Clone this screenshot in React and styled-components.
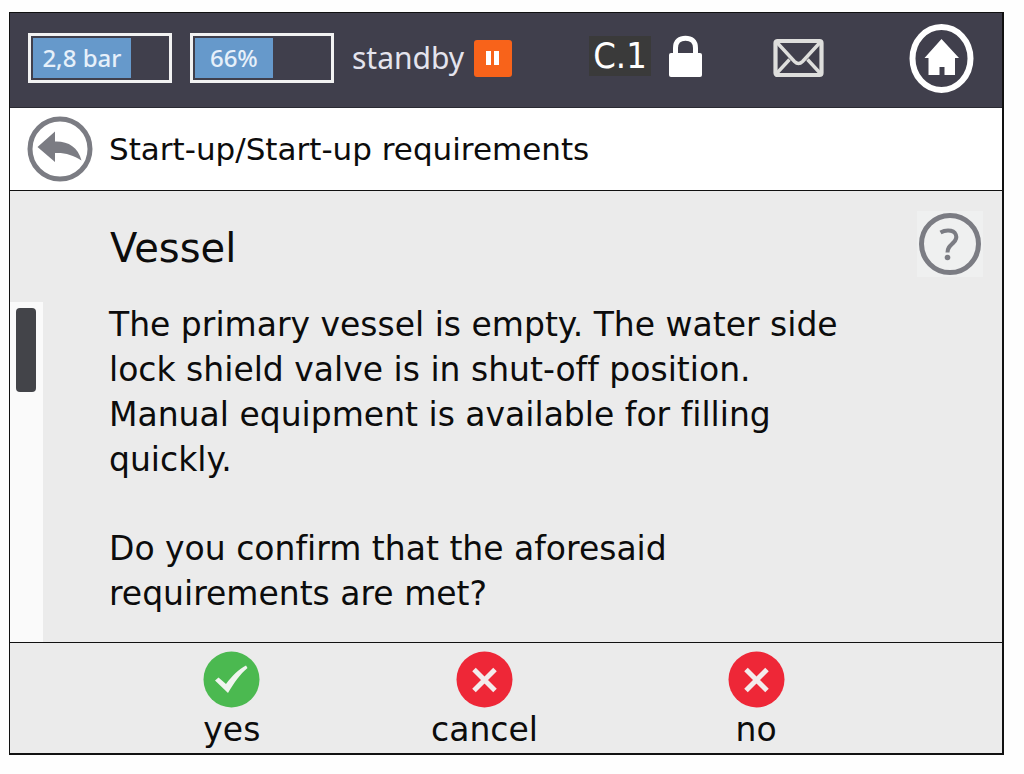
import styled, { createGlobalStyle, ThemeProvider } from "styled-components";

const theme = {
  sans: `"DejaVu Sans", Verdana, sans-serif`,
  narrow: `"Noto Sans", "Open Sans", sans-serif`,
  colors: {
    bar: "#403f4c",
    panel: "#ebebeb",
    line: "#111111",
    blue: "#6699cb",
    orange: "#f8631a",
    grey: "#7b7c83",
    green: "#4bb950",
    red: "#ee2737",
  },
}

const GlobalStyle = createGlobalStyle`
  * {
    box-sizing: border-box;
  }
  body {
    margin: 0;
    background: #fefefe;
    color: #0c0c0c;
    font-family: ${theme.sans};
    font-variant-ligatures: none;
  }
  button {
    padding: 0;
    border: 0;
    background: none;
    color: inherit;
    font: inherit;
    cursor: pointer;
  }
  svg {
    display: block;
  }
`

const Page = styled.div`
  display: flex;
  min-height: 100vh;
  padding: 12px 20px 19px 9px;
`

const Frame = styled.div`
  flex: 1;
  display: flex;
  flex-direction: column;
  border: 1px solid ${props => props.theme.colors.line};
  border-right-width: 2px;
  border-bottom-width: 2px;
`

const TopBar = styled.header`
  display: flex;
  align-items: center;
  height: 95px;
  padding: 0 28px 4px 18px;
  background: ${props => props.theme.colors.bar};
  border-bottom: 1px solid #2a2a32;
  color: #f4f4f8;
`

const Gauge = styled.div`
  width: 144px;
  height: 50px;
  margin-right: 18px;
  padding: 2px;
  border: 3px solid #f2f2f2;
`

const GaugeFill = styled.div`
  display: flex;
  align-items: center;
  justify-content: center;
  height: 100%;
  background: ${props => props.theme.colors.blue};
  color: #e6f0fa;
  font: 500 24px/40px ${props => props.theme.narrow};
  white-space: nowrap;
`

const Status = styled.div`
  display: flex;
  align-items: center;
  gap: 10px;
  font: 30px/40px ${props => props.theme.narrow};
  color: #e4e4ee;
`

const Right = styled.div`
  flex: 1;
  display: flex;
  align-items: center;
  justify-content: flex-end;
`

const Code = styled.div`
  width: 62px;
  margin: 0 18px 4px 0;
  background: #3a3a3a;
  color: #ffffff;
  font: 36px/40px "DejaVu Sans Condensed", ${props => props.theme.narrow};
  text-align: center;
`

const IconButton = styled.button`
  margin-left: ${props => props.$gap || 0}px;
`

const TitleBar = styled.nav`
  display: flex;
  align-items: center;
  gap: 16px;
  height: 83px;
  padding-left: 17px;
  background: #ffffff;
  border-bottom: 1px solid ${props => props.theme.colors.line};
`

const Crumb = styled.h1`
  margin: 0;
  font-size: 31px;
  font-weight: 400;
  line-height: 40px;
`

const Main = styled.main`
  flex: 1;
  display: flex;
  flex-direction: column;
  background: ${props => props.theme.colors.panel};
`

const Head = styled.div`
  display: flex;
  align-items: center;
  justify-content: space-between;
  height: 111px;
  padding: 0 19px 6px 100px;
`

const Heading = styled.h2`
  margin: 0;
  padding-top: 8px;
  font-size: 40px;
  font-weight: 400;
  line-height: 48px;
`

const HelpButton = styled.button`
  padding: 2px;
  background: #eff0f0;
`

const Content = styled.div`
  flex: 1;
  display: flex;
`

const Track = styled.div`
  width: 33px;
  padding: 6px;
  background: #fafafa;
`

const Thumb = styled.div`
  width: 20px;
  height: 84px;
  border-radius: 4px;
  background: #434449;
`

const Copy = styled.div`
  padding: 0 66px;
  font-size: 33px;
  line-height: 45px;
`

const Paragraph = styled.p`
  margin: 0 0 44px;
  &:last-child {
    margin: 0;
  }
`

const Actions = styled.footer`
  display: grid;
  grid-template-columns: 254fr 252fr 292fr;
  height: 111px;
  padding: 8px 100px 0 95px;
  background: ${props => props.theme.colors.panel};
  border-top: 1px solid ${props => props.theme.colors.line};
`

const Action = styled.button`
  display: flex;
  flex-direction: column;
  align-items: center;
  justify-self: center;
  && {
    font-size: 33px;
    line-height: 44px;
  }
`

const Pause = () => (
  <svg width="38" height="37" viewBox="0 0 38 37">
    <rect width="38" height="37" rx="3" fill={theme.colors.orange} />
    <path d="M12 11h5v14h-5zM20 11h5v14h-5z" fill="#fff" />
  </svg>
)

const Lock = () => (
  <svg width="34" height="46" viewBox="0 0 34 46" fill="none">
    <path d="M6.500 20V13C6.500 6 11 3.200 16.500 3.200s10 2.800 10 9.800v7" stroke="#fff" strokeWidth="5" />
    <rect y="18" width="33" height="24" rx="2" fill="#fff" />
  </svg>
)

const Mail = () => (
  <svg width="51" height="40" viewBox="0 0 51 40" fill="none" stroke="#dededc" strokeWidth="3.400" strokeLinejoin="round">
    <rect x="2.500" y="3" width="46" height="34" rx="2" strokeWidth="4.200" />
    <path d="M4 4.500L21.500 23.500Q25.500 27.500 29.500 23.500L47 4.500M4 35L16.500 21.500M47 35L34.500 21.500" />
  </svg>
)

const Home = () => (
  <svg width="65" height="69" viewBox="0 0 65 69">
    <ellipse cx="32.500" cy="34.500" rx="29" ry="31.500" fill="none" stroke="#fff" strokeWidth="6" />
    <path d="M32.500 15L50 34h-4v17H35.500v-8h-5v8H19.500V34h-4z" fill="#fff" />
  </svg>
)

const Back = () => (
  <svg width="66" height="66" viewBox="0 0 66 66">
    <circle cx="33" cy="33" r="30" fill="none" stroke={theme.colors.grey} strokeWidth="5" />
    <path d="M10.500 31L28 15.500V25.500C41 25 51 31 54.500 44.500C46 39 38 36.500 28 37V46z" fill={theme.colors.grey} />
  </svg>
)

const Help = () => (
  <svg width="62" height="62" viewBox="0 0 62 62" fill="none" stroke={theme.colors.grey}>
    <circle cx="31" cy="31" r="28.500" strokeWidth="5" />
    <path d="M21.500 19.500Q25 17.500 29 17.500C37.500 17.500 39.500 24.500 34.500 29.500C31 33 28.500 34.500 28.500 39.500" strokeWidth="4" />
    <circle cx="28.500" cy="44.500" r="2.800" fill={theme.colors.grey} stroke="none" />
  </svg>
)

const Yes = () => (
  <svg width="57" height="57" viewBox="0 0 57 57">
    <circle cx="28.500" cy="28.500" r="28" fill={theme.colors.green} />
    <path d="M12 29.500L15.500 26.500L23 33C29 25 36 18 43 14.500L44.500 17C37 23 31 32 25 42z" fill="#f0f4ef" />
  </svg>
)

const Cross = () => (
  <svg width="57" height="57" viewBox="0 0 57 57">
    <circle cx="28.500" cy="28.500" r="28" fill={theme.colors.red} />
    <path d="M18 18.500L39 39.500M39 18.500L18 39.500" stroke="#f3ecec" strokeWidth="5" />
  </svg>
)

const gauges = [
  { name: "Pressure", label: "2,8 bar", fill: 73 },
  { name: "Level", label: "66%", fill: 58 },
]

const actions = [
  { label: "yes", icon: <Yes /> },
  { label: "cancel", icon: <Cross /> },
  { label: "no", icon: <Cross /> },
]

function App() {
  return (
    <ThemeProvider theme={theme}>
      <GlobalStyle />
      <Page>
        <Frame>
          <TopBar>
            {gauges.map(gauge => (
              <Gauge key={gauge.name}>
                <GaugeFill style={{ width: `${gauge.fill}%` }}>{gauge.label}</GaugeFill>
              </Gauge>
            ))}
            <Status>standby <Pause /></Status>
            <Right>
              <Code>C.1</Code>
              <Lock />
              <IconButton $gap={70} aria-label="Messages"><Mail /></IconButton>
              <IconButton $gap={85} aria-label="Home"><Home /></IconButton>
            </Right>
          </TopBar>
          <TitleBar>
            <IconButton aria-label="Back"><Back /></IconButton>
            <Crumb>Start-up/Start-up requirements</Crumb>
          </TitleBar>
          <Main>
            <Head>
              <Heading>Vessel</Heading>
              <HelpButton aria-label="Help"><Help /></HelpButton>
            </Head>
            <Content>
              <Track><Thumb /></Track>
              <Copy>
                <Paragraph>
                  The primary vessel is empty. The water side<br />
                  lock shield valve is in shut-off position.<br />
                  Manual equipment is available for filling<br />
                  quickly.
                </Paragraph>
                <Paragraph>
                  Do you confirm that the aforesaid<br />
                  requirements are met?
                </Paragraph>
              </Copy>
            </Content>
          </Main>
          <Actions>
            {actions.map(action => (
              <Action key={action.label}>{action.icon}{action.label}</Action>
            ))}
          </Actions>
        </Frame>
      </Page>
    </ThemeProvider>
  )
}

export default App
